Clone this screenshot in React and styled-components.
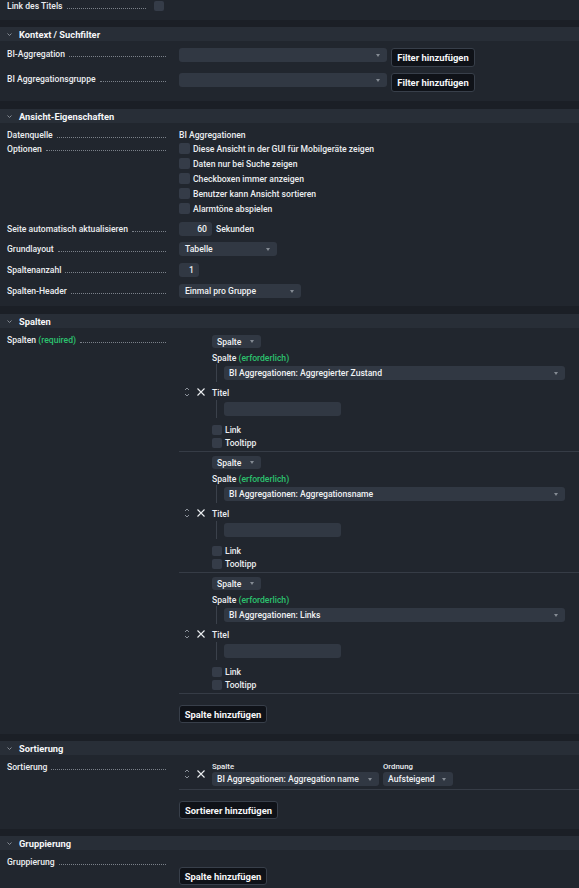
import React from 'react';
import styled, { createGlobalStyle } from 'styled-components';

const Global = createGlobalStyle`
  html, body { margin: 0; padding: 0; background: #1b1f26; }
  body {
    font-family: Roboto, "Liberation Sans", Arial, sans-serif;
    font-size: 8.6px;
    font-weight: 500;
    color: #eceef1;
  }
  * { box-sizing: border-box; }
`;

const Page = styled.div`
  display: flex;
  flex-direction: column;
`;

const Section = styled.section`
  background: #21262e;
  margin-top: ${(p) => p.$mt || 0}px;
`;

const Header = styled.div`
  height: 14px;
  background: #282e37;
  display: flex;
  align-items: center;
  gap: 7px;
  padding-left: 7px;
  font-weight: 700;
  font-size: 9.3px;
  color: #f6f7f9;
`;

const Body = styled.div`
  display: flex;
  flex-direction: column;
  padding: ${(p) => p.$pad};
`;

const Row = styled.div`
  display: flex;
  align-items: flex-start;
  margin-top: ${(p) => p.$mt || 0}px;
`;

const Label = styled.div`
  flex: none;
  width: ${(p) => p.$w || 166}px;
  height: ${(p) => p.$h || 12}px;
  margin-top: ${(p) => p.$mt || 0}px;
  margin-right: ${(p) => p.$gap || 13}px;
  padding-left: 7px;
  display: flex;
  align-items: center;
  white-space: nowrap;
`;

const Leader = styled.span`
  flex: 1;
  height: 0;
  margin: 4px 0 0 4px;
  border-bottom: 1px dotted #7b818a;
`;

const Value = styled.div`
  flex: 1;
  min-width: 0;
  display: flex;
  flex-direction: column;
  padding-top: ${(p) => p.$pt || 0}px;
`;

const Inline = styled.div`
  display: flex;
  align-items: ${(p) => p.$align || 'center'};
  height: ${(p) => (p.$h ? `${p.$h}px` : 'auto')};
`;

const Text = styled.span`
  line-height: 12px;
  white-space: nowrap;
  margin-left: ${(p) => p.$ml || 0}px;
`;

const Green = styled.span`
  color: #2cc26e;
`;

const SelectBox = styled.div`
  flex: none;
  width: ${(p) => (p.$w ? `${p.$w}px` : '100%')};
  height: ${(p) => p.$h || 14}px;
  background: #313843;
  border-radius: 3px;
  display: flex;
  align-items: center;
  padding: 0 7px 0 ${(p) => p.$pl ?? 5}px;
  color: #f0f2f4;
  white-space: nowrap;
  overflow: hidden;
`;

const Arrow = styled.span`
  margin-left: auto;
  flex: none;
  width: 0;
  height: 0;
  border-left: 2.5px solid transparent;
  border-right: 2.5px solid transparent;
  border-top: 3px solid #858b94;
`;

const Select = ({ children, ...rest }) => (
  <SelectBox {...rest}>
    <span>{children}</span>
    <Arrow />
  </SelectBox>
);

const InputBox = styled.div`
  flex: none;
  width: ${(p) => p.$w}px;
  height: 14px;
  background: #313843;
  border-radius: 3px;
  display: flex;
  align-items: center;
  justify-content: flex-end;
  padding-right: 5px;
  color: #f0f2f4;
`;

const Button = styled.div`
  flex: none;
  width: ${(p) => p.$w}px;
  height: ${(p) => p.$h || 18}px;
  margin-left: ${(p) => p.$ml || 0}px;
  margin-top: ${(p) => p.$mt || 0}px;
  background: #0f1218;
  border: 1px solid #383f4a;
  border-radius: 3px;
  display: flex;
  align-items: center;
  justify-content: center;
  font-weight: 700;
  font-size: 9.4px;
  color: #f6f7f9;
  white-space: nowrap;
`;

const Box = styled.span`
  flex: none;
  display: inline-block;
  width: ${(p) => p.$s || 10}px;
  height: ${(p) => p.$s || 10}px;
  background: #353c48;
  border-radius: 2px;
`;

const CheckItem = styled.div`
  display: flex;
  align-items: center;
  gap: ${(p) => p.$gap || 3}px;
  height: ${(p) => p.$h || 15}px;
`;

const Blocks = styled.div`
  display: flex;
  flex-direction: column;
`;

const ColBlock = styled.div`
  display: flex;
  align-items: center;
  padding: ${(p) => p.$pad || '4px 14px 2px 0'};
  border-bottom: 1px solid #363c46;
`;

const Handles = styled.div`
  flex: none;
  width: 33px;
  display: flex;
  align-items: center;
  padding-left: 5px;
  gap: 7px;
`;

const Inner = styled.div`
  flex: 1;
  min-width: 0;
  display: flex;
  flex-direction: column;
  align-items: flex-start;
`;

const FieldLabel = styled.div`
  height: ${(p) => p.$h || 12}px;
  line-height: ${(p) => p.$h || 12}px;
  margin-top: ${(p) => p.$mt || 0}px;
  font-size: ${(p) => p.$fs || 8.6}px;
  white-space: nowrap;
`;

const Indent = styled.div`
  align-self: stretch;
  height: 18px;
  margin: ${(p) => p.$mt || 0}px 0 0 4px;
  border-left: 1px solid #3b414b;
  padding-left: 7px;
  display: flex;
  align-items: center;
`;

const Checks = styled.div`
  margin-top: 5px;
  display: flex;
  flex-direction: column;
`;

const Field = styled.div`
  display: flex;
  flex-direction: column;
  margin-left: ${(p) => p.$ml || 0}px;
`;

const Chevron = () => (
  <svg width="5" height="3" viewBox="0 0 5 3">
    <path d="M0.5 0.5 L2.5 2.5 L4.5 0.5" fill="none" stroke="#858b94" strokeWidth="1" />
  </svg>
);

const UpDown = () => (
  <svg width="6" height="12" viewBox="0 0 6 12">
    <path d="M1 4 L3 2 L5 4" fill="none" stroke="#8a9099" strokeWidth="1" />
    <path d="M1 8 L3 10 L5 8" fill="none" stroke="#8a9099" strokeWidth="1" />
  </svg>
);

const Cross = () => (
  <svg width="8" height="8" viewBox="0 0 8 8">
    <path d="M0.5 0.5 L7.5 7.5 M7.5 0.5 L0.5 7.5" fill="none" stroke="#eceef1" strokeWidth="1.1" />
  </svg>
);

const SectionHeader = ({ title }) => (
  <Header>
    <Chevron />
    <span>{title}</span>
  </Header>
);

const LabelCell = ({ children, ...rest }) => (
  <Label {...rest}>
    <span>{children}</span>
    <Leader />
  </Label>
);

const columns = [
  'BI Aggregationen: Aggregierter Zustand',
  'BI Aggregationen: Aggregationsname',
  'BI Aggregationen: Links',
];

const options = [
  'Diese Ansicht in der GUI für Mobilgeräte zeigen',
  'Daten nur bei Suche zeigen',
  'Checkboxen immer anzeigen',
  'Benutzer kann Ansicht sortieren',
  'Alarmtöne abspielen',
];

export default function App() {
  return (
    <Page>
      <Global />

      <Section>
        <Body $pad="1px 0 9px">
          <Row>
            <LabelCell $w={146} $h={10} $gap={8}>Link des Titels</LabelCell>
            <Box />
          </Row>
        </Body>
      </Section>

      <Section $mt={7}>
        <SectionHeader title="Kontext / Suchfilter" />
        <Body $pad="7px 0 9px">
          <Row>
            <LabelCell>BI-Aggregation</LabelCell>
            <Inline $align="flex-start">
              <Select $w={208} />
              <Button $w={84} $h={19} $ml={4}>Filter hinzufügen</Button>
            </Inline>
          </Row>
          <Row $mt={6}>
            <LabelCell>BI Aggregationsgruppe</LabelCell>
            <Inline $align="flex-start">
              <Select $w={208} />
              <Button $w={84} $h={19} $ml={4}>Filter hinzufügen</Button>
            </Inline>
          </Row>
        </Body>
      </Section>

      <Section $mt={8}>
        <SectionHeader title="Ansicht-Eigenschaften" />
        <Body $pad="6px 0 8px">
          <Row>
            <LabelCell>Datenquelle</LabelCell>
            <Text>BI Aggregationen</Text>
          </Row>
          <Row>
            <LabelCell $h={15}>Optionen</LabelCell>
            <Value>
              {options.map((o) => (
                <CheckItem key={o}>
                  <Box $s={11} />
                  <Text>{o}</Text>
                </CheckItem>
              ))}
            </Value>
          </Row>
          <Row $mt={6}>
            <LabelCell $h={14}>Seite automatisch aktualisieren</LabelCell>
            <Inline $h={14}>
              <InputBox $w={33}>60</InputBox>
              <Text $ml={4}>Sekunden</Text>
            </Inline>
          </Row>
          <Row $mt={6}>
            <LabelCell $h={14}>Grundlayout</LabelCell>
            <Select $w={98} $pl={6}>Tabelle</Select>
          </Row>
          <Row $mt={7}>
            <LabelCell $h={14}>Spaltenanzahl</LabelCell>
            <InputBox $w={20}>1</InputBox>
          </Row>
          <Row $mt={7}>
            <LabelCell $h={14}>Spalten-Header</LabelCell>
            <Select $w={122} $pl={6}>Einmal pro Gruppe</Select>
          </Row>
        </Body>
      </Section>

      <Section $mt={8}>
        <SectionHeader title="Spalten" />
        <Body $pad="3px 0 11px">
          <Row>
            <LabelCell $mt={3}>
              Spalten&nbsp;<Green>(required)</Green>
            </LabelCell>
            <Value>
              <Blocks>
                {columns.map((c) => (
                  <ColBlock key={c}>
                    <Handles>
                      <UpDown />
                      <Cross />
                    </Handles>
                    <Inner>
                      <Select $w={49} $h={13} $pl={5}>Spalte</Select>
                      <FieldLabel $mt={4}>
                        Spalte <Green>(erforderlich)</Green>
                      </FieldLabel>
                      <Indent>
                        <Select>{c}</Select>
                      </Indent>
                      <FieldLabel $mt={5}>Titel</FieldLabel>
                      <Indent $mt={1}>
                        <InputBox $w={117} />
                      </Indent>
                      <Checks>
                        <CheckItem $h={13}>
                          <Box />
                          <Text>Link</Text>
                        </CheckItem>
                        <CheckItem $h={13}>
                          <Box />
                          <Text>Tooltipp</Text>
                        </CheckItem>
                      </Checks>
                    </Inner>
                  </ColBlock>
                ))}
              </Blocks>
              <Button $w={88} $mt={11}>Spalte hinzufügen</Button>
            </Value>
          </Row>
        </Body>
      </Section>

      <Section $mt={7}>
        <SectionHeader title="Sortierung" />
        <Body $pad="6px 0 10px">
          <Row>
            <LabelCell>Sortierung</LabelCell>
            <Value>
              <ColBlock $pad="0 0 3px 0">
                <Handles>
                  <UpDown />
                  <Cross />
                </Handles>
                <Field>
                  <FieldLabel $h={11} $fs={7.8}>Spalte</FieldLabel>
                  <Select $w={167} $pl={5}>BI Aggregationen: Aggregation name</Select>
                </Field>
                <Field $ml={4}>
                  <FieldLabel $h={11} $fs={7.8}>Ordnung</FieldLabel>
                  <Select $w={70} $pl={5}>Aufsteigend</Select>
                </Field>
              </ColBlock>
              <Button $w={99} $mt={11}>Sortierer hinzufügen</Button>
            </Value>
          </Row>
        </Body>
      </Section>

      <Section $mt={7}>
        <SectionHeader title="Gruppierung" />
        <Body $pad="6px 0 8px">
          <Row>
            <LabelCell>Gruppierung</LabelCell>
            <Value $pt={11}>
              <Button $w={88}>Spalte hinzufügen</Button>
            </Value>
          </Row>
        </Body>
      </Section>
    </Page>
  );
}
